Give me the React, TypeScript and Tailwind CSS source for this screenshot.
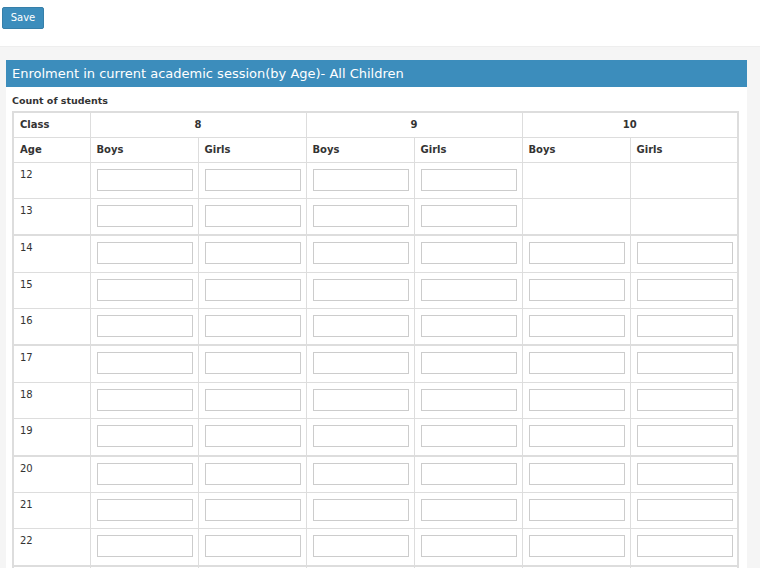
import React from 'react';

const groups: number[][] = [[12, 13], [14, 15, 16], [17, 18, 19], [20, 21, 22], [23, 24, 25]];
const classes = ['8', '9', '10'];

function Cell({ empty }: { empty?: boolean }) {
    return (
        <td className="border border-[#ddd] h-[36.7px] px-[6px] pt-[6px] pb-[7px] align-top">
            {!empty && <input className="block w-[96px] h-[22px] border border-[#ccc] bg-white outline-none" />}
        </td>
    );
}

export default function App() {
    return (
        <div className="min-h-screen bg-[#f5f5f5] text-[#333]" style={{ fontFamily: '"DejaVu Sans", sans-serif' }}>
            <div className="bg-white h-[47px] pt-[7px] pl-[2px] border-b border-[#eee]">
                <button className="block h-[22px] w-[42px] rounded-[2px] bg-[#3c8dbc] border border-[#367fa9] text-white text-[10px] leading-none">
                    Save
                </button>
            </div>
            <div className="pt-[13px] pl-[6px] pr-[13px]">
                <div className="bg-white">
                    <div className="bg-[#3c8dbc] h-[27px] flex items-center px-[6px] pt-[1px] text-white text-[13px]">
                        Enrolment in current academic session(by Age)- All Children
                    </div>
                    <div className="px-[6px] pt-[7px]">
                        <div className="text-[9.5px] font-bold h-[17px]">Count of students</div>
                        <table className="table-fixed border-collapse border-2 border-[#ddd] w-[727px] text-[10px]">
                            <colgroup>
                                <col className="w-[77px]" />
                                {[0, 1, 2, 3, 4, 5].map(i => <col key={i} className="w-[108px]" />)}
                            </colgroup>
                            <thead>
                                <tr className="h-[25px]">
                                    <th className="border border-[#ddd] text-left pl-[6px] font-bold">Class</th>
                                    {classes.map(c => (
                                        <th key={c} colSpan={2} className="border border-[#ddd] font-bold text-center">{c}</th>
                                    ))}
                                </tr>
                                <tr className="h-[25px]">
                                    <th className="border border-[#ddd] text-left pl-[6px] font-bold">Age</th>
                                    {classes.map(c => (
                                        <React.Fragment key={c}>
                                            <th className="border border-[#ddd] text-left pl-[6px] font-bold">Boys</th>
                                            <th className="border border-[#ddd] text-left pl-[6px] font-bold">Girls</th>
                                        </React.Fragment>
                                    ))}
                                </tr>
                            </thead>
                            {groups.map((g, gi) => (
                                <tbody key={gi} className={gi > 0 ? 'border-t-2 border-[#ddd]' : ''}>
                                    {g.map(age => (
                                        <tr key={age}>
                                            <td className="border border-[#ddd] h-[36.7px] px-[6px] pt-[4px] align-top">{age}</td>
                                            <Cell />
                                            <Cell />
                                            <Cell />
                                            <Cell />
                                            <Cell empty={age < 14} />
                                            <Cell empty={age < 14} />
                                        </tr>
                                    ))}
                                </tbody>
                            ))}
                        </table>
                    </div>
                </div>
            </div>
        </div>
    );
}
